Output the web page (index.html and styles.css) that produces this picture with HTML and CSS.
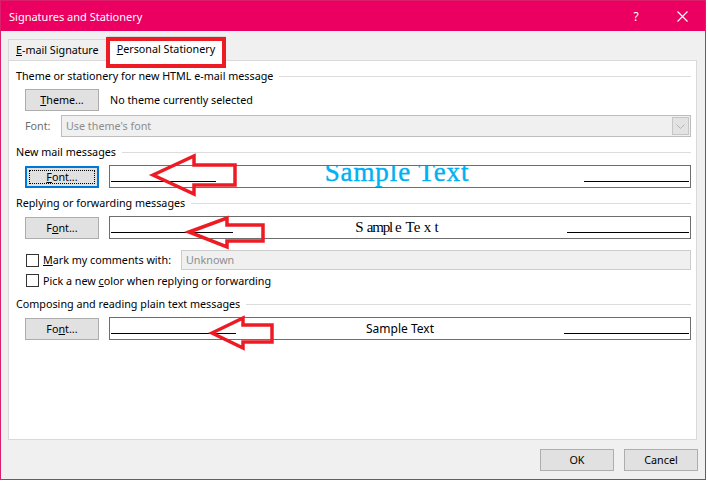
FILE: index.html
```html
<!DOCTYPE html>
<html>
<head>
<meta charset="utf-8">
<link rel="stylesheet" href="styles.css">
</head>
<body>
<div class="window">
  <div class="titlebar">
    <span class="title">Signatures and Stationery</span>
    <div class="cap">?</div>
    <div class="cap"><svg width="11" height="11" viewBox="0 0 11 11"><path d="M0.5 0.5 L10.5 10.5 M10.5 0.5 L0.5 10.5" stroke="#fff" stroke-width="1.1" fill="none"/></svg></div>
  </div>
  <div class="tabs">
    <div class="tab"><span><u>E</u>-mail Signature</span></div>
    <div class="tab active"><span><u>P</u>ersonal Stationery</span></div>
  </div>
  <div class="panel">
    <div class="hdr h1">Theme or stationery for new HTML e-mail message</div>
    <div class="row r-theme">
      <div class="btn"><span><u>T</u>heme...</span></div>
      <span class="note">No theme currently selected</span>
    </div>
    <div class="row r-font">
      <span class="lbl">Font:</span>
      <div class="combo"><span>Use theme's font</span>
        <div class="dd"><svg width="9" height="5" viewBox="0 0 9 5"><path d="M0.5 0.5 L4.5 4.5 L8.5 0.5" stroke="#b4b4b4" fill="none"/></svg></div>
      </div>
    </div>
    <div class="hdr h2">New mail messages</div>
    <div class="row r-box r2">
      <div class="btn focus"><span><u>F</u>ont...</span></div>
      <div class="sample">
        <div class="ln w1"></div>
        <div class="txt t1">Sample Text</div>
        <div class="ln w1"></div>
      </div>
    </div>
    <div class="hdr h3">Replying or forwarding messages</div>
    <div class="row r-box r3">
      <div class="btn"><span>F<u>o</u>nt...</span></div>
      <div class="sample">
        <div class="ln w2"></div>
        <div class="txt t2">S<span class="k1">ampl</span>e T<span class="k2">e</span>x<span class="k3">t</span></div>
        <div class="ln w2"></div>
      </div>
    </div>
    <div class="row cbrow c1">
      <div class="cb"></div>
      <span class="cblabel"><u>M</u>ark my comments with:</span>
      <div class="field">Unknown</div>
    </div>
    <div class="row cbrow c2">
      <div class="cb"></div>
      <span>Pick a new <u>c</u>olor when replying or forwarding</span>
    </div>
    <div class="hdr h4">Composing and reading plain text messages</div>
    <div class="row r-box r4">
      <div class="btn"><span>Fo<u>n</u>t...</span></div>
      <div class="sample">
        <div class="ln w3"></div>
        <div class="txt t3">Sample Text</div>
        <div class="ln w3"></div>
      </div>
    </div>
  </div>
  <div class="footer">
    <div class="btn"><span>OK</span></div>
    <div class="btn"><span>Cancel</span></div>
  </div>
  <svg class="annot" width="708" height="486" viewBox="0 0 708 486">
    <rect x="108" y="39" width="116" height="27" fill="none" stroke="#ed1c24" stroke-width="4"/>
    <polygon points="153,175 194,156 194,165 235,165 235,185 194,185 194,194" fill="none" stroke="#ed1c24" stroke-width="3.5"/>
    <polygon points="189,232 227,218 227,225 263,225 263,241 227,241 227,247" fill="none" stroke="#ed1c24" stroke-width="3.5"/>
    <polygon points="212,333 243,318 243,325 272,325 272,342 243,342 243,348" fill="none" stroke="#ed1c24" stroke-width="3.5"/>
  </svg>
</div>
</body>
</html>
```
FILE: styles.css
```css
body {
  margin: 0;
  background: #fff;
  font-family: "Noto Sans", "Open Sans", sans-serif;
  font-size: 10.75px;
  color: #000;
}

u { text-decoration: underline; text-underline-offset: 1px; }

.window {
  position: relative;
  width: 706px;
  height: 480px;
  box-sizing: border-box;
  border: 1px solid #dc1f6b;
  background: #f0f0f0;
  display: flex;
  flex-direction: column;
}

.titlebar {
  height: 30px;
  background: #eb0062;
  color: #fff;
  display: flex;
  align-items: center;
  padding-left: 8px;
}
.title { flex: 1; font-size: 11px; }
.cap {
  width: 46px;
  height: 30px;
  display: flex;
  align-items: center;
  justify-content: center;
  font-size: 12px;
}

.tabs {
  display: flex;
  align-items: flex-end;
  height: 24px;
  margin-top: 5px;
  padding-left: 7px;
}
.tab {
  height: 21px;
  box-sizing: border-box;
  border: 1px solid #d9d9d9;
  border-bottom: none;
  padding: 0 7px;
  display: flex;
  align-items: center;
  background: #f0f0f0;
}
.tab.active {
  height: 25px;
  margin-bottom: -1px;
  background: #fff;
  border-left: none;
  padding: 0 10px;
  position: relative;
  z-index: 1;
}

.panel {
  margin-left: 7px;
  width: 689px;
  height: 380px;
  box-sizing: border-box;
  border: 1px solid #d9d9d9;
  background: #fff;
  padding: 0 5px 0 7px;
  display: flex;
  flex-direction: column;
}

.hdr {
  display: flex;
  align-items: center;
  height: 16px;
  gap: 6px;
  white-space: nowrap;
}
.hdr::after {
  content: "";
  flex: 1;
  height: 1px;
  background: #dcdcdc;
}
.h1 { margin-top: 7px; }
.h2 { margin-top: 7px; }
.h3 { margin-top: 7px; }
.h4 { margin-top: 9px; }

.row {
  display: flex;
  align-items: center;
  padding-left: 9px;
}
.r-theme { margin-top: 5px; height: 22px; }
.r-font { margin-top: 4px; height: 22px; }
.r2 { margin-top: 5px; height: 23px; }
.r3 { margin-top: 5px; height: 23px; }
.r4 { margin-top: 5px; height: 23px; }
.c1 { margin-top: 11px; height: 20px; padding-left: 10px; }
.c2 { margin-top: 4px; height: 13px; padding-left: 10px; }

.btn {
  width: 74px;
  height: 22px;
  box-sizing: border-box;
  border: 1px solid #adadad;
  background: #e1e1e1;
  display: flex;
  align-items: center;
  justify-content: center;
  flex-shrink: 0;
}
.btn.focus {
  border: 2px solid #0078d7;
  outline: 1px dotted #000;
  outline-offset: -5px;
}

.note { margin-left: 11px; }

.lbl { width: 36px; color: #6d6d6d; }
.combo {
  width: 630px;
  height: 22px;
  box-sizing: border-box;
  border: 1px solid #bdbdbd;
  background: #f0f0f0;
  color: #8d8d8d;
  display: flex;
  align-items: center;
  padding: 0 1px 0 4px;
}
.dd {
  margin-left: auto;
  width: 17px;
  height: 18px;
  box-sizing: border-box;
  border: 1px solid #c6c6c6;
  background: #e3e3e3;
  display: flex;
  align-items: center;
  justify-content: center;
}

.sample {
  margin-left: 10px;
  width: 582px;
  height: 23px;
  box-sizing: border-box;
  border: 1px solid #6e6e6e;
  background: #fff;
  display: flex;
  padding: 0 1px;
  overflow: hidden;
}
.ln {
  height: 1px;
  background: #000;
  align-self: flex-end;
  margin-bottom: 5px;
  flex-shrink: 0;
}
.w1 { width: 105px; }
.w2 { width: 122px; }
.w3 { width: 125px; }
.txt {
  flex: 1;
  text-align: center;
  white-space: nowrap;
}
.t1 {
  font-family: "Liberation Serif", serif;
  font-size: 27px;
  line-height: 12px;
  color: #00b0f0;
  letter-spacing: 0.9px;
  align-self: flex-start;
  padding-right: 6px;
  -webkit-text-stroke: 0.4px #00b0f0;
}
.t2 {
  font-family: "Liberation Serif", serif;
  font-size: 15px;
  line-height: 21px;
  color: #000;
  letter-spacing: 0.2px;
  padding-right: 6px;
}
.k1 { margin: 0 3px 0 3px; letter-spacing: -1.2px; }
.k2 { margin-right: 3px; }
.k3 { margin-left: 3px; }
.t3 {
  line-height: 21px;
  font-size: 12px;
}

.cb {
  width: 13px;
  height: 13px;
  box-sizing: border-box;
  border: 1px solid #333;
  background: #fff;
  margin-right: 4px;
  flex-shrink: 0;
}
.cblabel { width: 138px; }
.field {
  flex: 1;
  height: 20px;
  box-sizing: border-box;
  border: 1px solid #cccccc;
  background: #f0f0f0;
  color: #8d8d8d;
  padding-left: 4px;
  display: flex;
  align-items: center;
}

.footer {
  display: flex;
  justify-content: flex-end;
  gap: 10px;
  padding: 9px 7px 0 0;
}

.annot {
  position: absolute;
  left: -1px;
  top: -1px;
  pointer-events: none;
  z-index: 5;
}
```
